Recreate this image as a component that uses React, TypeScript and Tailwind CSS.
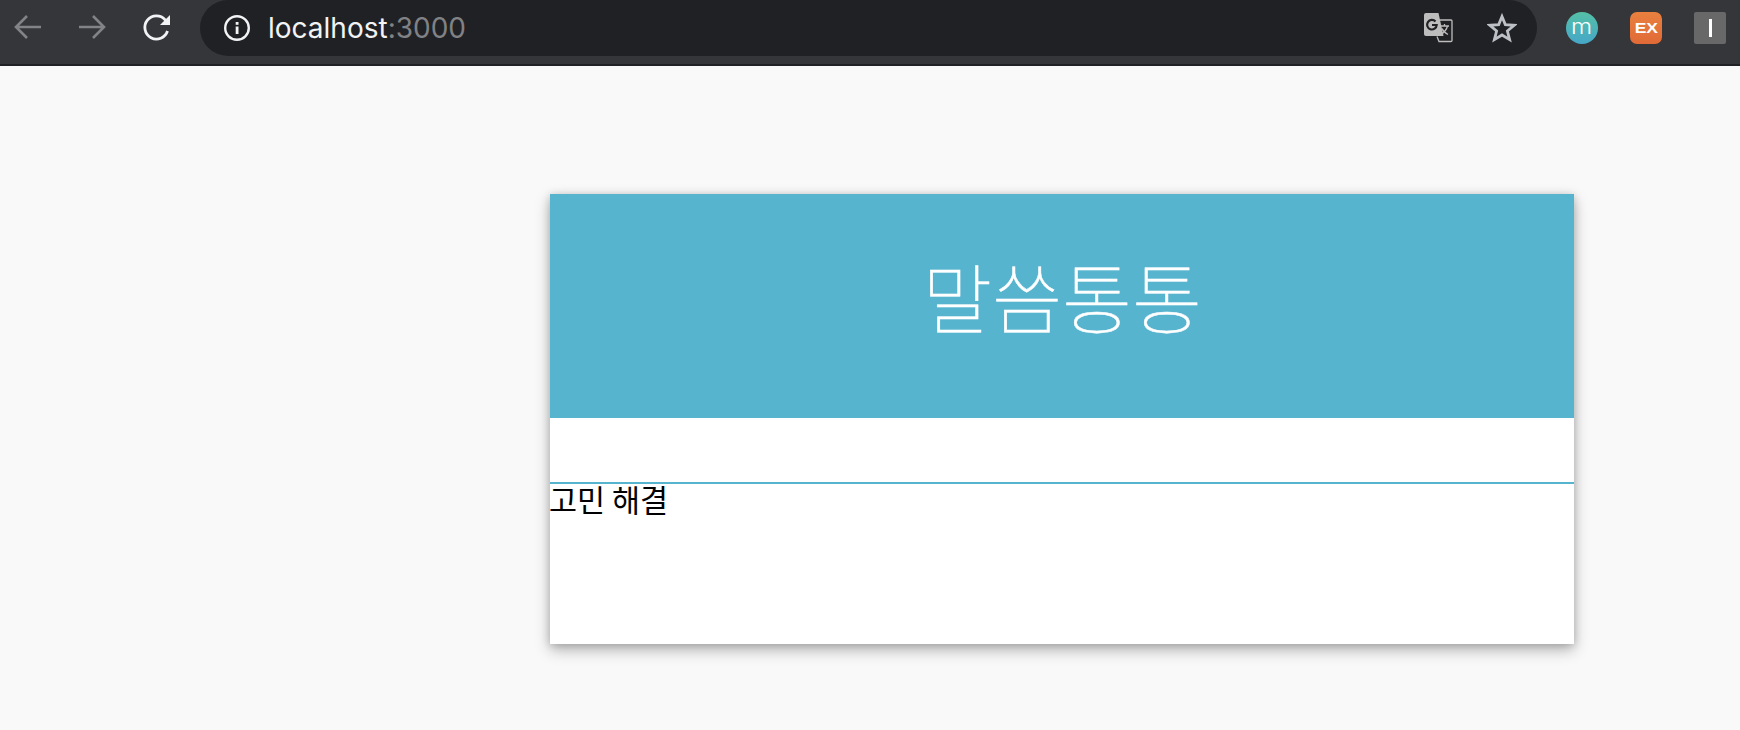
import React from "react";

function Toolbar() {
  return (
    <div className="h-[66px] shrink-0 flex bg-[#35363a] border-b-2 border-[#202124] font-['Inter','Noto_Sans',sans-serif]">
      <div className="w-[200px] shrink-0 flex items-start">
        <svg className="ml-[12px] mt-[11px]" width="32" height="32" viewBox="0 0 32 32" fill="none" stroke="#828386" strokeWidth="2.6">
          <path d="M29 16H4M15 5 4 16l11 11" />
        </svg>
        <svg className="ml-[32px] mt-[11px]" width="32" height="32" viewBox="0 0 32 32" fill="none" stroke="#828386" strokeWidth="2.6">
          <path d="M3 16h25M17 5l11 11-11 11" />
        </svg>
        <svg className="ml-[33px] mt-[11px]" width="32" height="32" viewBox="0 0 32 32" fill="none" stroke="#f1f3f4" strokeWidth="2.8">
          <path d="M26.5 20a11.6 11.6 0 1 1-2.3-11.2L27 11" />
          <path d="M29 4v10H19z" fill="#f1f3f4" stroke="none" />
        </svg>
      </div>
      <div className="w-[1337px] h-[56px] rounded-[28px] bg-[#202124] flex items-center pl-[23px] pr-[20px]">
        <svg width="28" height="28" viewBox="0 0 28 28" fill="none">
          <circle cx="14" cy="14" r="11.8" stroke="#f1f3f4" strokeWidth="2.4" />
          <rect x="12.7" y="12.5" width="2.8" height="7.5" fill="#f1f3f4" />
          <rect x="12.7" y="8" width="2.8" height="2.8" fill="#f1f3f4" />
        </svg>
        <div className="ml-[17px] text-[28px] leading-none text-[#f1f3f4]">
          localhost<span className="text-[#808285]">:3000</span>
        </div>
        <div className="ml-auto flex items-center gap-[34px]">
          <svg width="30" height="30" viewBox="0 0 30 30">
            <path d="M3 0h12.5l5 23H3a2 2 0 0 1-2-2V2a2 2 0 0 1 2-2z" fill="#bdbdbd" />
            <path d="M15 7h13a1 1 0 0 1 1 1v19.500a1 1 0 0 1-1 1H16l-2-5" fill="none" stroke="#bdbdbd" strokeWidth="1.3" />
            <path d="M12.500 8.500a4.800 4.800 0 1 0 1.200 3.500H9" fill="none" stroke="#202124" strokeWidth="2.200" />
            <path d="M17 13h9M21.500 11v2M24.500 13c-1 4-4 7-7 8.500M19 15.500c1 2.500 3 4.500 6 6" fill="none" stroke="#bdbdbd" strokeWidth="1.300" />
          </svg>
          <svg width="30" height="30" viewBox="0 0 30 30" fill="none" stroke="#bdc1c6" strokeWidth="2.800" strokeLinejoin="miter">
            <path d="M15 3.500 18.300 11.600 27.200 12.300 20.400 18 22.600 26.600 15 22 7.400 26.600 9.600 18 2.800 12.300 11.700 11.600Z" />
          </svg>
        </div>
      </div>
      <div className="flex-1 flex items-start pl-[29px] pt-[12px] gap-[32px]">
        <div className="w-[32px] h-[32px] rounded-full bg-gradient-to-b from-[#55bfa6] to-[#46a7c8] flex items-center justify-center">
          <span className="text-white text-[22px] font-light leading-none pb-[4px] scale-x-110">m</span>
        </div>
        <div className="w-[32px] h-[32px] rounded-[7px] bg-gradient-to-b from-[#e9803f] to-[#e06a36] flex items-center justify-center">
          <span className="text-white text-[14px] font-bold leading-none font-['Liberation_Sans',sans-serif] scale-x-125">EX</span>
        </div>
        <div className="w-[32px] h-[32px] rounded-[2px] bg-[#686868] flex items-center justify-center">
          <div className="w-[3px] h-[18px] bg-white" />
        </div>
      </div>
    </div>
  );
}

export default function App() {
  return (
    <div className="h-[730px] overflow-hidden flex flex-col bg-[#f9f9f9] font-['Noto_Sans_CJK_KR',sans-serif]">
      <Toolbar />
      <div className="flex-1 pl-[550px] pt-[128px]">
        <div className="w-[1024px] h-[450px] bg-white shadow-[0_6px_14px_rgba(0,0,0,0.28),0_1px_8px_rgba(0,0,0,0.16)]">
          <div className="h-[224px] bg-[#57b4cf] flex justify-center pt-[63px]">
            <h1 className="text-[76px] leading-none font-thin [-webkit-text-stroke:0.5px_white] text-white">말씀통통</h1>
          </div>
          <div className="h-[66px] border-b-2 border-[#57b4cf]" />
          <div className="text-[30.5px] leading-[30px] -ml-px text-black">고민 해결</div>
        </div>
      </div>
    </div>
  );
}
